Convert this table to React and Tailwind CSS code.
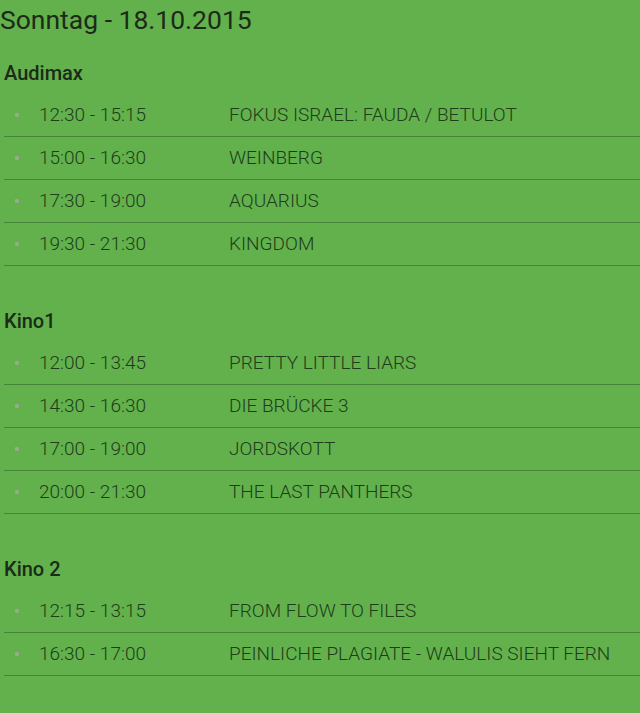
import React from "react";

const sections = [
  {
    name: "Audimax",
    rows: [
      ["12:30 - 15:15", "FOKUS ISRAEL: FAUDA / BETULOT"],
      ["15:00 - 16:30", "WEINBERG"],
      ["17:30 - 19:00", "AQUARIUS"],
      ["19:30 - 21:30", "KINGDOM"],
    ],
  },
  {
    name: "Kino1",
    rows: [
      ["12:00 - 13:45", "PRETTY LITTLE LIARS"],
      ["14:30 - 16:30", "DIE BRÜCKE 3"],
      ["17:00 - 19:00", "JORDSKOTT"],
      ["20:00 - 21:30", "THE LAST PANTHERS"],
    ],
  },
  {
    name: "Kino 2",
    rows: [
      ["12:15 - 13:15", "FROM FLOW TO FILES"],
      ["16:30 - 17:00", "PEINLICHE PLAGIATE - WALULIS SIEHT FERN"],
    ],
  },
];

export default function App() {
  return (
    <div className="w-[640px] h-[713px] bg-[#62b14c] font-['Roboto',sans-serif] overflow-hidden">
      <h1 className="text-[26.5px] leading-[40px] text-[#1c2a18] font-normal">
        Sonntag - 18.10.2015
      </h1>
      {sections.map((s, i) => (
        <div key={s.name} className={i === 0 ? "mt-[18px]" : "mt-[40px]"}>
          <h2 className="pl-[4px] text-[20px] leading-[30px] font-medium text-[#1c2a18]">
            {s.name}
          </h2>
          <ul className="mt-[6px] ml-[4px]">
            {s.rows.map(([t, title]) => (
              <li
                key={t}
                className="flex items-center h-[43px] border-b border-[#44853a] text-[19px] font-light text-[#1e3d19]"
              >
                <span className="ml-[11px] w-[4px] h-[4px] rounded-[1px] bg-[#92ad88]" />
                <span className="ml-[20px] w-[190px]">{t}</span>
                <span>{title}</span>
              </li>
            ))}
          </ul>
        </div>
      ))}
    </div>
  );
}
